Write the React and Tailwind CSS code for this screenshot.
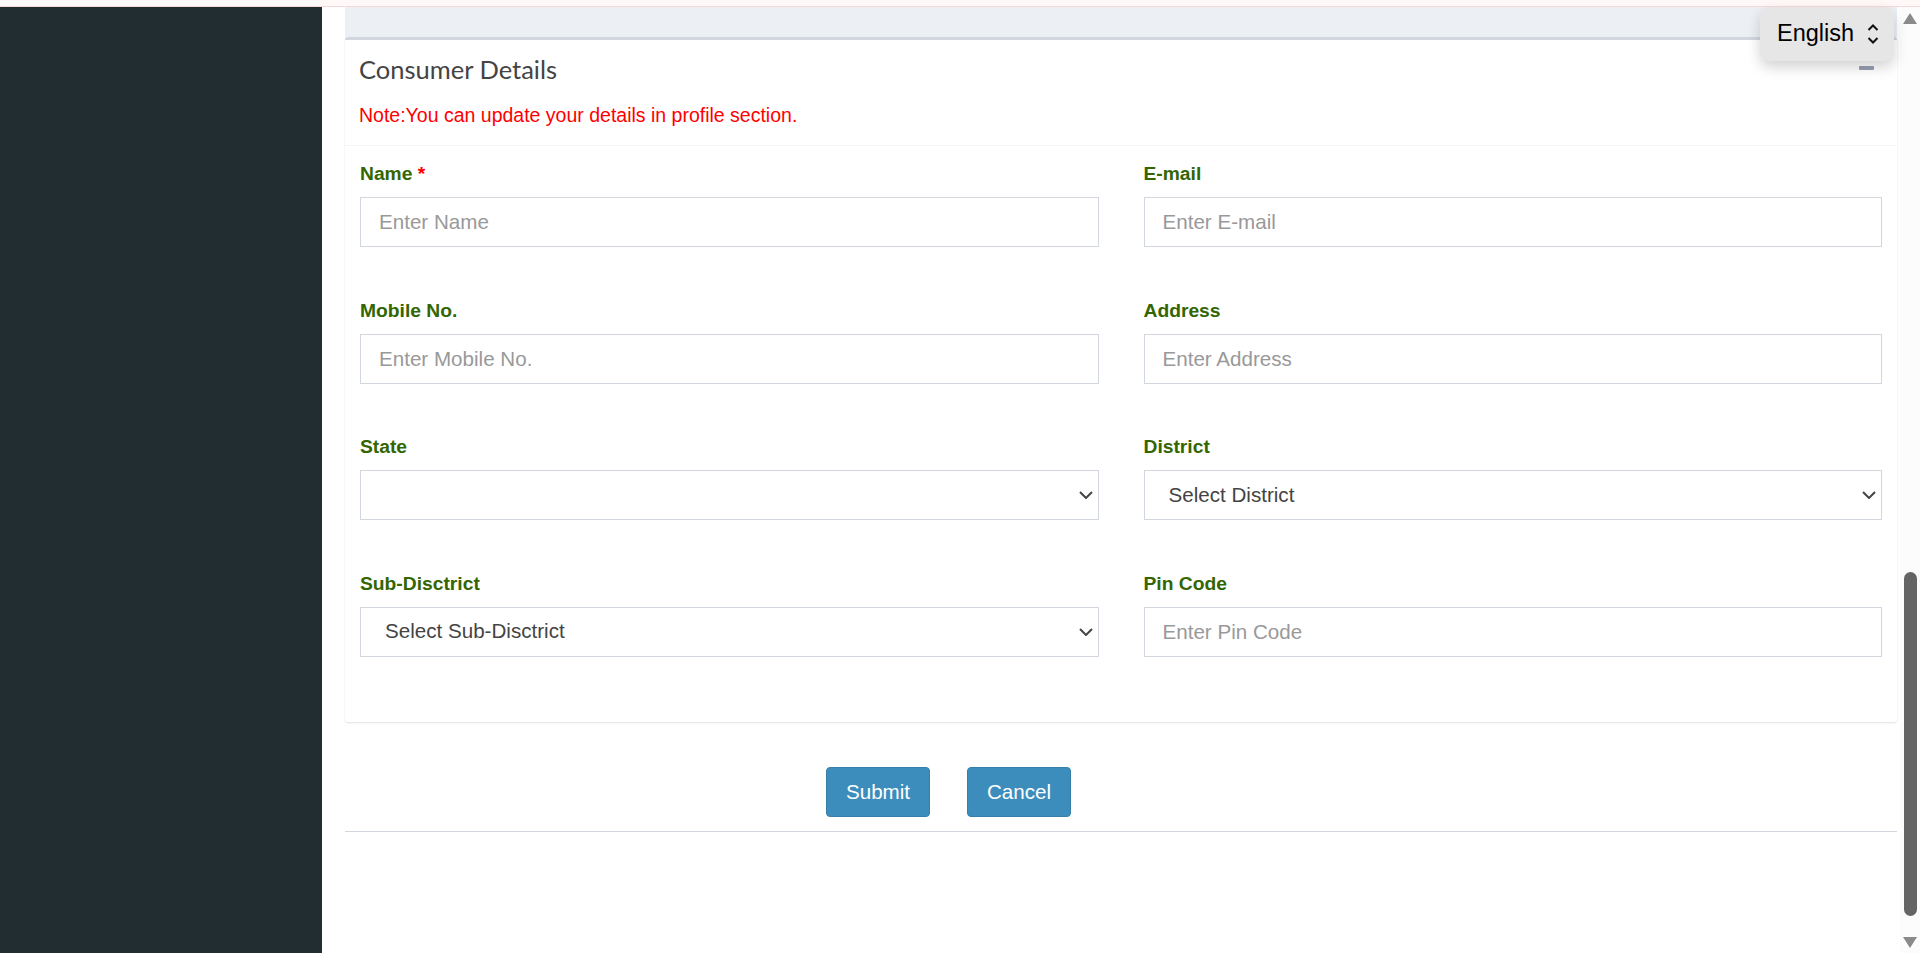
import React from 'react';

// form fields, two per row
const fields = [
    { label: 'Name', required: true, type: 'input', placeholder: 'Enter Name' },
    { label: 'E-mail', type: 'input', placeholder: 'Enter E-mail' },
    { label: 'Mobile No.', type: 'input', placeholder: 'Enter Mobile No.' },
    { label: 'Address', type: 'input', placeholder: 'Enter Address' },
    { label: 'State', type: 'select', options: [''] },
    { label: 'District', type: 'select', options: ['Select District'] },
    { label: 'Sub-Disctrict', type: 'select', options: ['Select Sub-Disctrict'] },
    { label: 'Pin Code', type: 'input', placeholder: 'Enter Pin Code' },
];

const ChevronDown = () => (
    <svg width="14" height="8" viewBox="0 0 14 8" fill="none">
        <path d="M1 1L7 7L13 1" stroke="#444" strokeWidth="2" />
    </svg>
);

const UpDown = () => (
    <svg width="12" height="22" viewBox="0 0 12 22" fill="none">
        <path d="M1.5 7L6 2.5L10.5 7" stroke="#111" strokeWidth="2" />
        <path d="M1.5 15L6 19.5L10.5 15" stroke="#111" strokeWidth="2" />
    </svg>
);

const Field = ({ field }) => (
    <div>
        <label className="block text-[19.25px] leading-[27.5px] font-bold text-[#336600] mb-[9.5px]">
            {field.label}
            {field.required && <span className="text-[#ff0000]"> *</span>}
        </label>
        {field.type === 'input' ? (
            <input
                type="text"
                placeholder={field.placeholder}
                className="block w-full h-[50px] border border-[#d2d6de] bg-white px-[18px] text-[20.6px] text-[#555] placeholder:text-[#999] outline-none"
            />
        ) : (
            <div className="relative">
                <select
                    defaultValue={field.options[0]}
                    className="block w-full h-[50px] border border-[#d2d6de] bg-white pl-[24px] pr-[30px] text-[20.6px] text-[#444] appearance-none outline-none"
                >
                    {field.options.map((o) => (
                        <option key={o} value={o}>{o}</option>
                    ))}
                </select>
                <span className="pointer-events-none absolute right-[6px] top-[21px] flex">
                    <ChevronDown />
                </span>
            </div>
        )}
    </div>
);

const App = () => {
    return (
        <div className="relative h-screen w-full overflow-hidden flex flex-col bg-white font-['Liberation_Sans',Arial,sans-serif]">
            {/* top strip */}
            <div className="h-[7px] shrink-0 bg-[#fff8f8] border-b border-[#f6d8d8]" />

            <div className="flex flex-1 min-h-0">
                {/* sidebar */}
                <aside className="w-[322px] shrink-0 bg-[#222d32]" />

                {/* content */}
                <main className="flex-1 min-w-0 pl-[23px] pr-[3px]">
                    <div className="h-[30px] bg-[#ecf0f5]" />

                    <section className="bg-white border-t-[3px] border-[#d2d6de] rounded-[3px] shadow-[0_1px_2px_rgba(0,0,0,0.12)]">
                        <div className="flex items-start justify-between pl-[14px] pr-[23px] pt-[14px] pb-[16px] border-b border-[#f4f4f4]">
                            <div>
                                <h3 className="font-['Lato','Open_Sans',sans-serif] text-[25.5px] leading-[1.2] text-[#444]">
                                    Consumer Details
                                </h3>
                                <p className="mt-[17px] text-[19.5px] leading-[27.5px] text-[#ff0000]">
                                    Note:You can update your details in profile section.
                                </p>
                            </div>
                            <button className="mt-[12px] w-[15px] h-[4px] bg-[#97a0b3] rounded-[1px]" />
                        </div>

                        <div className="grid grid-cols-2 gap-x-[45px] gap-y-[49.5px] px-[15px] pt-[14px] pb-[65px]">
                            {fields.map((f) => (
                                <Field key={f.label} field={f} />
                            ))}
                        </div>
                    </section>

                    <div className="flex gap-[37px] pl-[481px] mt-[45.5px]">
                        <button className="w-[104px] h-[50px] rounded-[4px] bg-[#3c8dbc] border border-[#367fa9] text-white text-[20.6px]">
                            Submit
                        </button>
                        <button className="w-[104px] h-[50px] rounded-[4px] bg-[#3c8dbc] border border-[#367fa9] text-white text-[20.6px]">
                            Cancel
                        </button>
                    </div>

                    <div className="mt-[14px] border-t border-[#d2d6de]" />
                </main>

                {/* scrollbar */}
                <div className="w-[20px] shrink-0 bg-[#fcfcfc] flex flex-col items-center pt-[6px]">
                    <svg width="14" height="11" viewBox="0 0 14 11">
                        <polygon points="7,0 14,11 0,11" fill="#8a8a8a" />
                    </svg>
                    <div className="mt-[548px] w-[13px] h-[344px] rounded-full bg-[#646464]" />
                    <svg className="mt-[21px]" width="14" height="11" viewBox="0 0 14 11">
                        <polygon points="0,0 14,0 7,11" fill="#8a8a8a" />
                    </svg>
                </div>
            </div>

            {/* language picker */}
            <div className="absolute top-[7px] right-[26px] w-[134px] h-[54px] rounded-[10px] bg-[#e6e6e6] shadow-[0_6px_14px_rgba(0,0,0,0.18)] flex items-center pl-[17px] gap-[13px]">
                <span className="text-[23.5px] text-black">English</span>
                <UpDown />
            </div>
        </div>
    );
};

export default App;
